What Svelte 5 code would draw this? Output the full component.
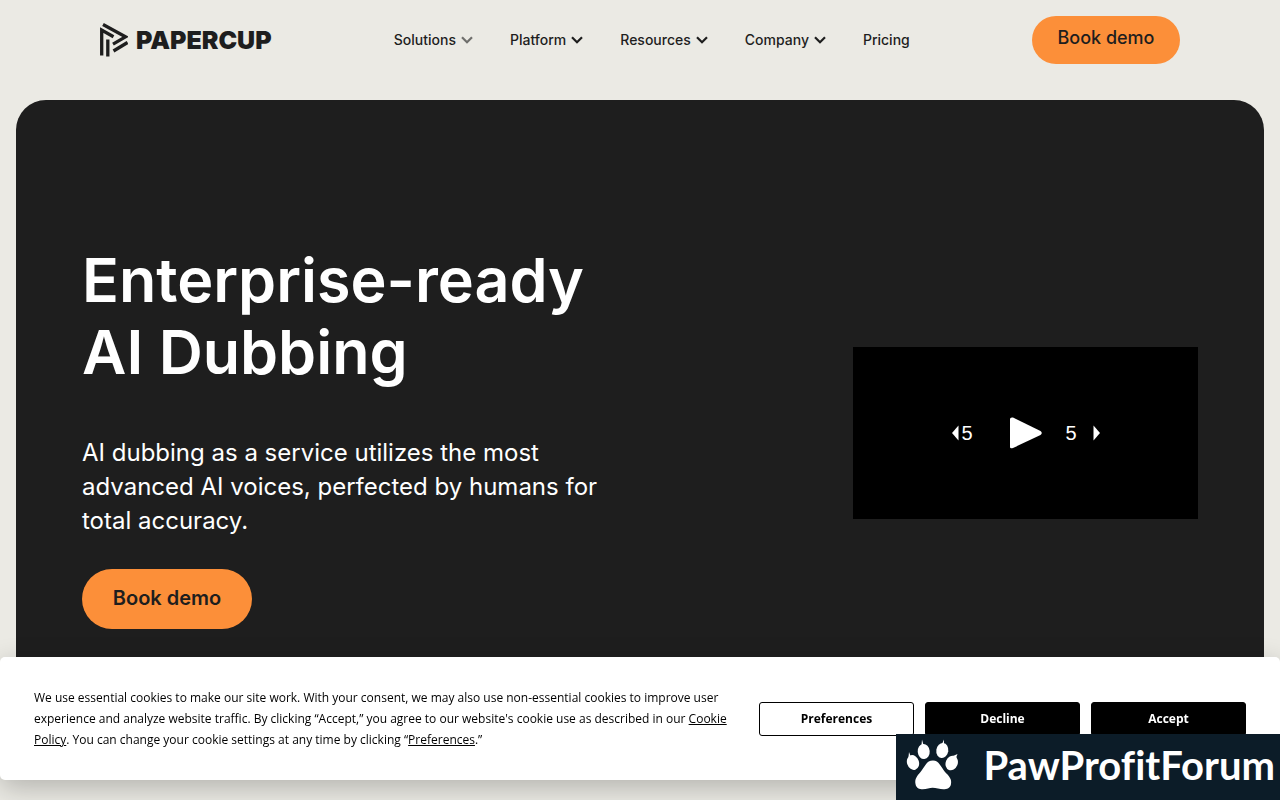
<script lang="ts">
	const navItems = [
		{ label: 'Solutions', menu: true, muted: true },
		{ label: 'Platform', menu: true },
		{ label: 'Resources', menu: true },
		{ label: 'Company', menu: true },
		{ label: 'Pricing', menu: false }
	];

	let playing = $state(false);
	let consentOpen = $state(true);
</script>

<div class="page">
	<header>
		<a class="logo" href="/" aria-label="Papercup home">
			<svg width="28" height="34" viewBox="0 0 28 34" fill="none" stroke="#1e1e1e" stroke-width="3.3">
				<path d="M3 1.5L25.5 13.8L13 21.2" />
				<path d="M1.7 32.500V7L13.500 13.800" />
				<path d="M13.500 28L27.500 19.500" />
				<path d="M7.800 33.500V16.500" />
			</svg>
			<span>PAPERCUP</span>
		</a>

		<nav>
			{#each navItems as item}
				{#if item.menu}
					<button class="navItem">
						{item.label}
						<svg class:muted={item.muted} width="12" height="8" viewBox="0 0 12 8" fill="none" stroke="#1e1e1e" stroke-width="2.2">
							<path d="M1 1.2L6 6.2L11 1.2" />
						</svg>
					</button>
				{:else}
					<a class="navItem" href="/pricing">{item.label}</a>
				{/if}
			{/each}
		</nav>

		<a class="cta" href="/demo">Book demo</a>
	</header>

	<main>
		<div class="intro">
			<h1>Enterprise-ready<br />AI Dubbing</h1>
			<p>AI dubbing as a service utilizes the most advanced AI voices, perfected by humans for total accuracy.</p>
			<a class="cta large" href="/demo">Book demo</a>
		</div>

		<div class="player">
			<button class="skip" aria-label="Back 5 seconds">
				<svg width="7" height="16" viewBox="0 0 7 16" fill="#fff"><path d="M6.5 0.5V15.5L0 8Z" /></svg>
				<span>5</span>
			</button>
			<button class="play" aria-label="Play" onclick={() => (playing = !playing)}>
				<svg width="32" height="32" viewBox="0 0 32 32" fill="#fff">
					<path d="M0 2Q0 0 3 0.5L30.5 14Q33 16 30.5 18L3 31Q0 32 0 30Z" />
				</svg>
			</button>
			<button class="skip forward" aria-label="Forward 5 seconds">
				<span>5</span>
				<svg width="7" height="16" viewBox="0 0 7 16" fill="#fff"><path d="M0.5 0.5V15.5L7 8Z" /></svg>
			</button>
		</div>
	</main>
</div>

{#if consentOpen}
	<section class="consent" aria-label="Cookie consent">
		<p>
			We use essential cookies to make our site work. With your consent, we may also use non-essential cookies to improve user
			experience and analyze website traffic. By clicking “Accept,” you agree to our website's cookie use as described in our
			<a href="/cookies">Cookie Policy</a>. You can change your cookie settings at any time by clicking “<a href="/preferences">Preferences</a>.”
		</p>
		<div class="choices">
			<button class="outline">Preferences</button>
			<button onclick={() => (consentOpen = false)}>Decline</button>
			<button onclick={() => (consentOpen = false)}>Accept</button>
		</div>
	</section>
{/if}

<aside class="badge">
	<svg width="52" height="52" viewBox="0 0 52 52" fill="#fff">
		<ellipse cx="7" cy="23.500" rx="6" ry="7.500" transform="rotate(-18 7 23.500)" />
		<ellipse cx="17.700" cy="12.500" rx="6" ry="7.500" transform="rotate(-5 17.700 12.500)" />
		<ellipse cx="36.300" cy="11.500" rx="6" ry="7.500" transform="rotate(8 36.300 11.500)" />
		<ellipse cx="45.700" cy="24" rx="6" ry="7.500" transform="rotate(22 45.700 24)" />
		<path d="M2.500 18L3 13L4.500 17ZM15.500 6L16 0.500L17.500 6ZM36 5L38 0.500L38 6ZM47 17L51.500 15L50 19Z" />
		<path d="M27 21.500C33 21.500 35 28 39 33C43 37 46 40 45 45C44 51 37 51 32 49.500C28 48.500 25 48.500 22 49.500C17 51 10.500 51 9.500 45C8.500 40 11 37 14.500 33C19 28 20 21.500 27 21.500Z" />
	</svg>
	<span>PawProfitForum</span>
</aside>

<style>
	:global(body) {
		margin: 0;
		background: #ebeae4;
		color: #1e1e1e;
		font-family: Inter, sans-serif;
	}

	.page {
		min-height: 100vh;
		display: flex;
		flex-direction: column;
	}

	button {
		font-family: inherit;
		color: inherit;
		border: none;
		background: none;
		padding: 0;
		cursor: pointer;
	}

	a {
		color: inherit;
	}

	header {
		display: flex;
		align-items: center;
		justify-content: space-between;
		height: 80px;
		flex-shrink: 0;
		padding: 0 100px;
		margin-bottom: 20px;
	}

	.logo {
		display: flex;
		align-items: center;
		gap: 8px;
		text-decoration: none;
		font-size: 25px;
		line-height: 34px;
		font-weight: 900;
	}

	nav {
		display: flex;
		gap: 37px;
	}

	.navItem {
		display: flex;
		align-items: center;
		gap: 5px;
		font-size: 14px;
		line-height: 20px;
		font-weight: 500;
		text-decoration: none;
	}

	.muted {
		opacity: 0.6;
	}

	.cta {
		box-sizing: border-box;
		min-width: 148px;
		height: 48px;
		padding: 10px 24px;
		border-radius: 30px;
		background: #fc8f39;
		font-size: 18px;
		line-height: 24px;
		font-weight: 500;
		text-align: center;
		text-decoration: none;
	}

	main {
		flex: 1;
		display: flex;
		justify-content: space-between;
		margin: 0 16px 32px;
		padding: 144px 66px 0;
		border-radius: 30px;
		background: #1e1e1e;
		color: #fff;
	}

	.intro {
		width: 540px;
	}

	h1 {
		margin: 0 0 48px;
		font-size: 61px;
		line-height: 72px;
		font-weight: 600;
	}

	.intro p {
		margin: 0 0 31px;
		font-size: 24px;
		line-height: 34px;
	}

	.cta.large {
		display: inline-block;
		min-width: 170px;
		height: 60px;
		padding: 17px 28px;
		color: #1e1e1e;
		font-size: 20px;
		font-weight: 600;
	}

	.player {
		display: flex;
		align-items: center;
		justify-content: center;
		gap: 24px;
		width: 345px;
		height: 172px;
		margin-top: 103px;
		background: #000;
	}

	.skip {
		display: flex;
		align-items: center;
		gap: 3px;
		width: 34px;
		color: #fff;
		font-family: 'Liberation Sans', sans-serif;
		font-size: 20px;
	}

	.forward {
		justify-content: space-between;
	}

	.play svg {
		display: block;
	}

	.consent {
		position: fixed;
		right: 0;
		bottom: 20px;
		left: 0;
		display: flex;
		align-items: center;
		justify-content: space-between;
		gap: 24px;
		padding: 30px 34px;
		border-radius: 5px;
		background: #fff;
		color: #000;
		box-shadow: 0 8px 28px rgba(0, 0, 0, 0.24);
		font-family: 'Open Sans', sans-serif;
		font-size: 12px;
	}

	.consent p {
		flex: 1;
		margin: 0;
		line-height: 21px;
	}

	.choices {
		display: flex;
		gap: 11px;
	}

	.choices button {
		width: 155px;
		height: 34px;
		border: 1px solid #000;
		border-radius: 3px;
		background: #000;
		color: #fff;
		font-size: 12px;
		font-weight: 700;
	}

	.choices .outline {
		background: #fff;
		color: #000;
	}

	.badge {
		position: fixed;
		right: 0;
		bottom: 0;
		box-sizing: border-box;
		display: flex;
		align-items: center;
		justify-content: space-between;
		width: 384px;
		height: 66px;
		padding: 0 5px 5px 10px;
		background: #0c1c28;
		color: #fff;
		font-family: Lato, sans-serif;
		font-size: 40px;
		font-weight: 700;
		font-variant-ligatures: none;
	}

	.badge svg {
		flex-shrink: 0;
	}
</style>
